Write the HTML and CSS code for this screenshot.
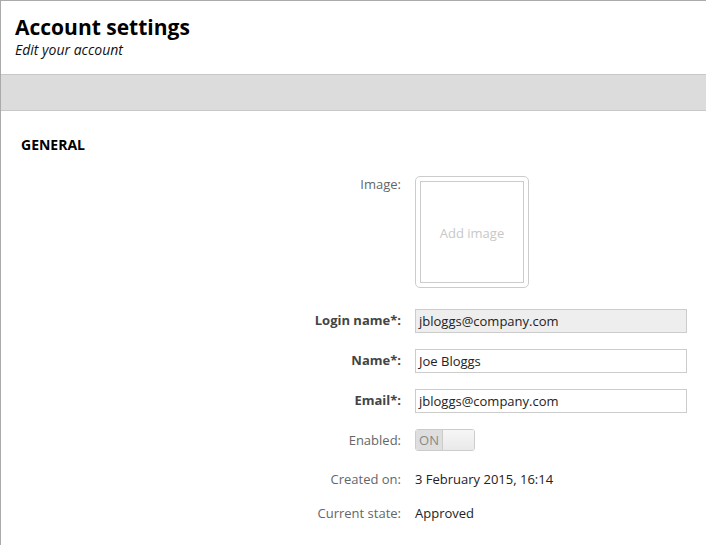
FILE: index.html
```html
<!DOCTYPE html>
<html>
<head>
<meta charset="utf-8">
<link rel="stylesheet" href="styles.css">
</head>
<body>
<div class="page">
  <header class="header">
    <h1 class="title">Account settings</h1>
    <div class="subtitle">Edit your account</div>
  </header>
  <div class="toolbar"></div>
  <section class="section">
    <h2 class="section-title">GENERAL</h2>
    <div class="form">
      <div class="row row-top">
        <div class="label">Image:</div>
        <div class="value">
          <div class="image-box"><div class="image-inner">Add image</div></div>
        </div>
      </div>
      <div class="row row-input">
        <div class="label req">Login name*:</div>
        <div class="value"><div class="input disabled">jbloggs@company.com</div></div>
      </div>
      <div class="row row-input">
        <div class="label req">Name*:</div>
        <div class="value"><div class="input">Joe Bloggs</div></div>
      </div>
      <div class="row row-input">
        <div class="label req">Email*:</div>
        <div class="value"><div class="input">jbloggs@company.com</div></div>
      </div>
      <div class="row row-toggle">
        <div class="label">Enabled:</div>
        <div class="value">
          <div class="toggle"><span class="toggle-on">ON</span><span class="toggle-knob"></span></div>
        </div>
      </div>
      <div class="row row-text">
        <div class="label">Created on:</div>
        <div class="value text">3 February 2015, 16:14</div>
      </div>
      <div class="row row-text">
        <div class="label">Current state:</div>
        <div class="value text">Approved</div>
      </div>
    </div>
  </section>
</div>
</body>
</html>
```
FILE: styles.css
```css
html, body {
  margin: 0;
  padding: 0;
  background: #fff;
}
body {
  font-family: "Open Sans", "DejaVu Sans", sans-serif;
  font-size: 13px;
  color: #333;
}
.page {
  border-top: 1px solid #aaa;
  border-left: 1px solid #aaa;
  min-height: 545px;
  box-sizing: border-box;
}
.header {
  padding: 13px 14px 16px;
}
.title {
  margin: 0;
  font-size: 21px;
  line-height: 27px;
  font-weight: 700;
  color: #000;
}
.subtitle {
  font-size: 14px;
  line-height: 17px;
  font-style: italic;
  color: #111;
}
.toolbar {
  height: 35px;
  background: #dcdcdc;
  border-top: 1px solid #c8c8c8;
  border-bottom: 1px solid #c8c8c8;
}
.section {
  padding: 25px 0 0;
}
.section-title {
  margin: 0 0 21px 20px;
  font-size: 14px;
  line-height: 18px;
  font-weight: 700;
  color: #000;
}
.form {
  display: flex;
  flex-direction: column;
}
.row {
  display: flex;
  align-items: center;
  gap: 14px;
}
.row-top {
  align-items: flex-start;
  margin-bottom: 21px;
}
.row-input {
  margin-bottom: 16px;
}
.row-toggle {
  margin-bottom: 19px;
}
.row-text {
  margin-bottom: 16px;
}
.label {
  width: 400px;
  text-align: right;
  color: #666;
  line-height: 18px;
  flex: none;
}
.row-input .label {
  margin-top: -3px;
}
.label.req {
  font-weight: 700;
  color: #444;
}
.value {
  width: 272px;
}
.value.text {
  line-height: 18px;
  color: #222;
}
.image-box {
  border: 1px solid #ccc;
  border-radius: 5px;
  padding: 4px;
  box-sizing: border-box;
  width: 114px;
  height: 112px;
  margin-top: 1px;
}
.image-inner {
  height: 100%;
  border: 1px solid #ccc;
  box-sizing: border-box;
  display: flex;
  align-items: center;
  justify-content: center;
  padding-top: 2px;
  color: #c8c8c8;
  font-size: 13px;
}
.input {
  height: 24px;
  box-sizing: border-box;
  border: 1px solid #ccc;
  padding: 0 3px;
  line-height: 22px;
  color: #222;
  background: #fff;
}
.input.disabled {
  background: #eee;
}
.toggle {
  display: flex;
  width: 60px;
  height: 22px;
  box-sizing: border-box;
  border: 1px solid #ccc;
  border-radius: 3px;
  overflow: hidden;
}
.toggle-on {
  width: 27px;
  background: #dedede;
  color: #888;
  font-size: 13px;
  line-height: 20px;
  text-align: center;
  box-sizing: border-box;
  border-right: 1px solid #ccc;
}
.toggle-knob {
  flex: 1;
  background: linear-gradient(#f6f6f6, #e9e9e9);
}
```
